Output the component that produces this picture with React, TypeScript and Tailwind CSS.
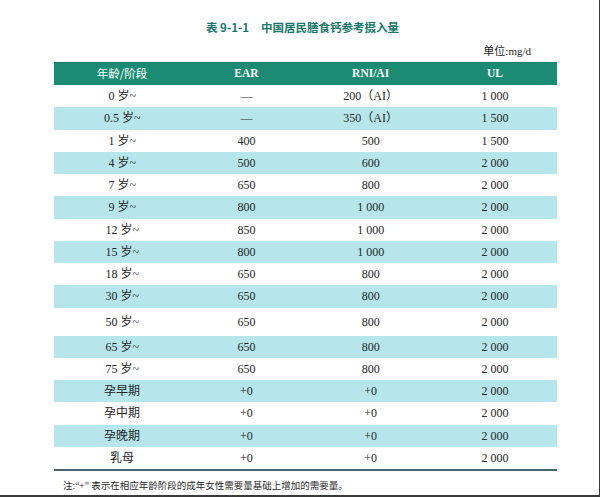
import React from "react";

type Row = { age: string; ear: string; rni: string; ul: string; tall?: boolean };

const rows: Row[] = [
    { age: "0 岁~", ear: "—", rni: "200（AI）", ul: "1 000" },
    { age: "0.5 岁~", ear: "—", rni: "350（AI）", ul: "1 500" },
    { age: "1 岁~", ear: "400", rni: "500", ul: "1 500" },
    { age: "4 岁~", ear: "500", rni: "600", ul: "2 000" },
    { age: "7 岁~", ear: "650", rni: "800", ul: "2 000" },
    { age: "9 岁~", ear: "800", rni: "1 000", ul: "2 000" },
    { age: "12 岁~", ear: "850", rni: "1 000", ul: "2 000" },
    { age: "15 岁~", ear: "800", rni: "1 000", ul: "2 000" },
    { age: "18 岁~", ear: "650", rni: "800", ul: "2 000" },
    { age: "30 岁~", ear: "650", rni: "800", ul: "2 000" },
    { age: "50 岁~", ear: "650", rni: "800", ul: "2 000", tall: true },
    { age: "65 岁~", ear: "650", rni: "800", ul: "2 000" },
    { age: "75 岁~", ear: "650", rni: "800", ul: "2 000" },
    { age: "孕早期", ear: "+0", rni: "+0", ul: "2 000" },
    { age: "孕中期", ear: "+0", rni: "+0", ul: "2 000" },
    { age: "孕晚期", ear: "+0", rni: "+0", ul: "2 000" },
    { age: "乳母", ear: "+0", rni: "+0", ul: "2 000" },
];

const serif = "font-['Liberation_Serif','Noto_Sans_CJK_SC',serif]";
const sans = "font-['Noto_Sans_CJK_SC','Liberation_Sans',sans-serif]";

export default function App() {
    return (
        <div className="w-[600px] h-[497px] bg-white flex flex-col border-b-2 border-r border-[#3a3a3a] overflow-hidden">
            <h1 className={`${sans} pt-[19px] h-[35px] text-[11.5px] leading-[16px] font-bold text-[#16796a] text-center pl-[6px]`}>
                表 9-1-1<span className="ml-[12px]">中国居民膳食钙参考摄入量</span>
            </h1>
            <div className={`${serif} mt-[9px] h-[14px] leading-[14px] text-[11px] text-[#222] text-right pr-[68px]`}>
                单位:mg/d
            </div>

            <div className="mt-[4px] mx-[54px] w-[503px] flex flex-col">
                <div className="h-[23px] bg-[#1b8b73] grid grid-cols-4 pl-[6px] items-center text-white text-[11.5px] text-center border-t border-[#137560]">
                    <div className={sans}>年龄/阶段</div>
                    <div className={`${serif} font-bold`}>EAR</div>
                    <div className={`${serif} font-bold`}>RNI/AI</div>
                    <div className={`${serif} font-bold`}>UL</div>
                </div>

                {rows.map((r, i) => (
                    <div
                        key={r.age}
                        className={`${serif} grid grid-cols-4 pl-[6px] items-center text-center text-[12px] text-[#262626] ${
                            r.tall ? "h-[28px]" : "h-[22.25px]"
                        } ${i % 2 === 1 ? "bg-[#b6e6eb]" : "bg-white"}`}
                    >
                        <div>{r.age}</div>
                        <div>{r.ear}</div>
                        <div>{r.rni}</div>
                        <div>{r.ul}</div>
                    </div>
                ))}

                <div className="h-[2px] bg-[#4b6470]" />
            </div>

            <p className={`${serif} mt-[8px] ml-[63px] text-[9.5px] leading-[14px] text-[#2a2a2a]`}>
                注:“+” 表示在相应年龄阶段的成年女性需要量基础上增加的需要量。
            </p>
        </div>
    );
}
